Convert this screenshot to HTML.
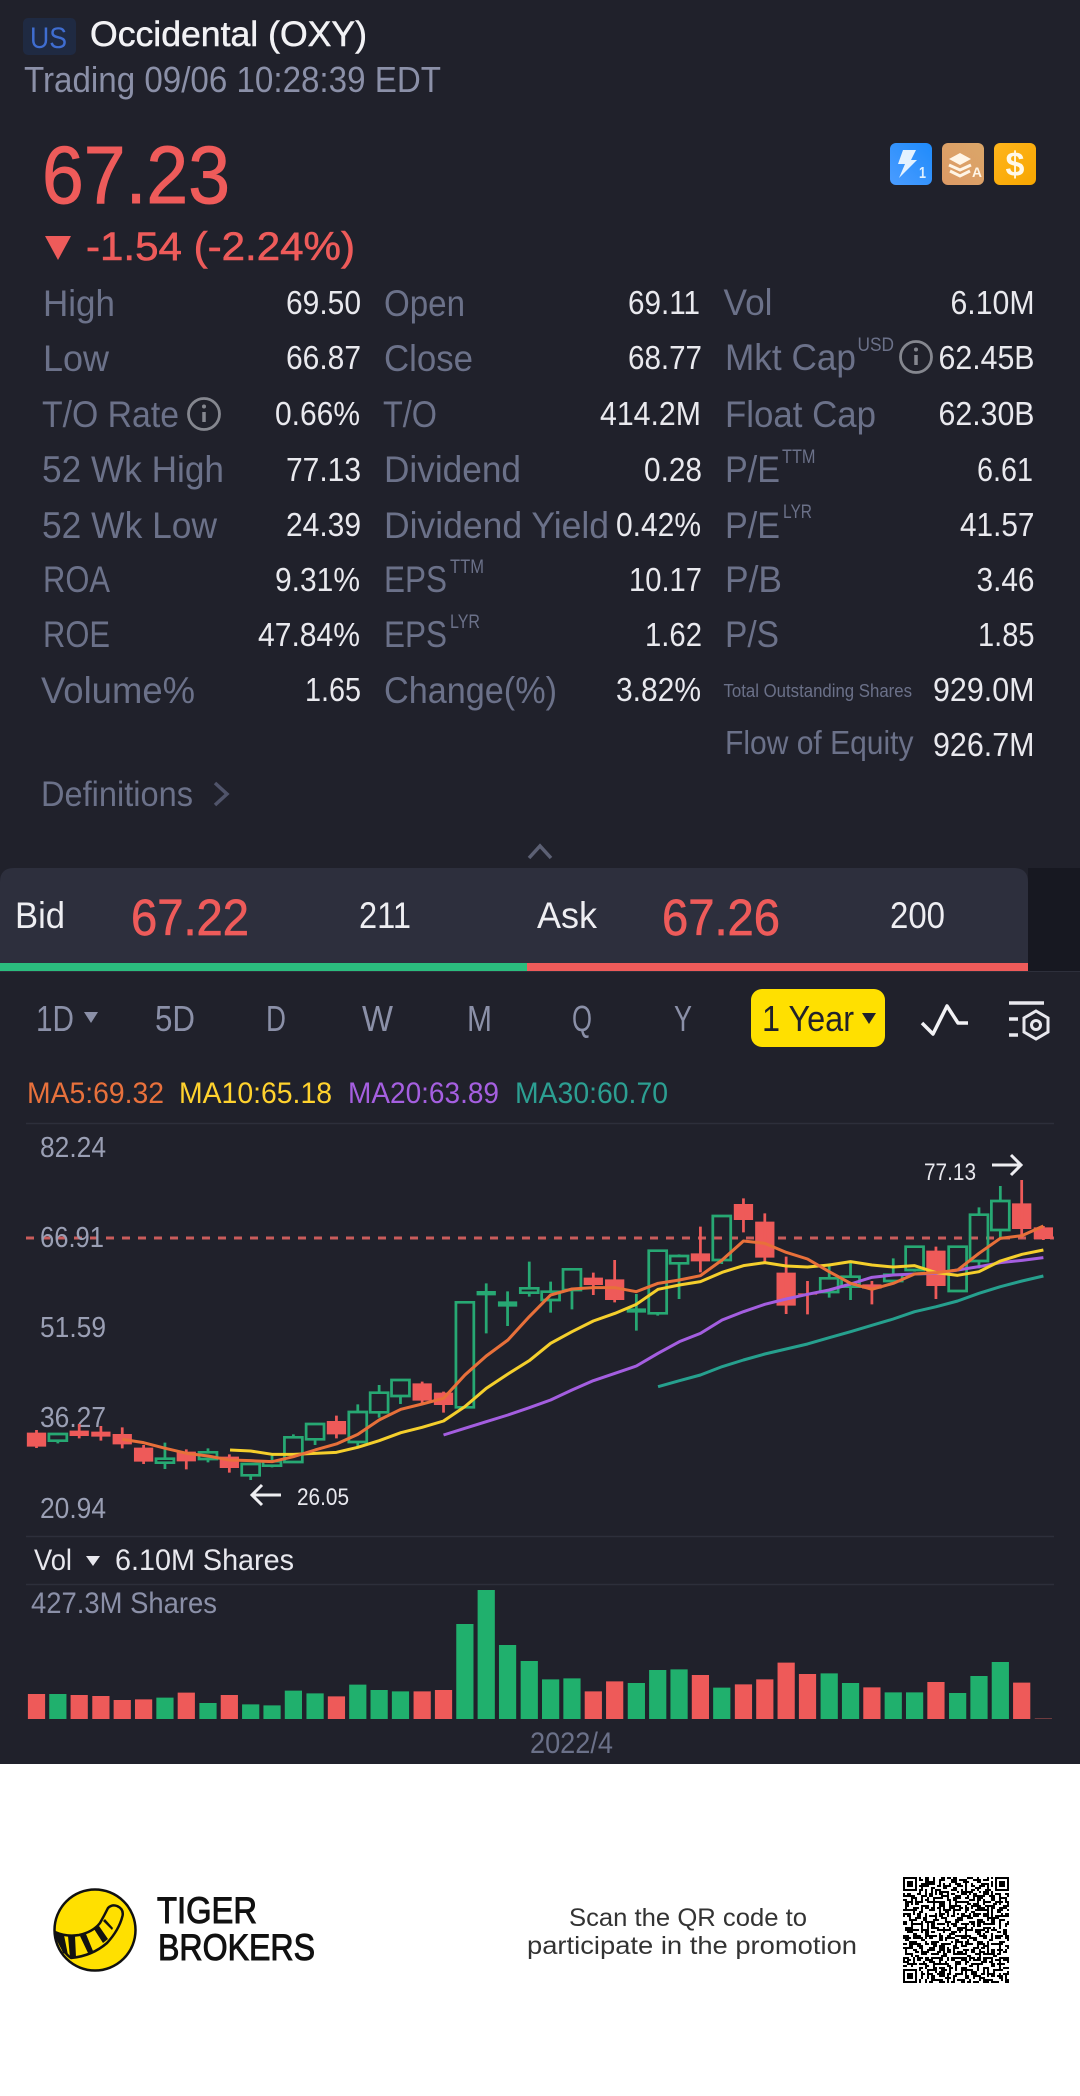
<!DOCTYPE html>
<html lang="en"><head><meta charset="utf-8"><title>Occidental (OXY)</title>
<style>
html,body{margin:0;padding:0;background:#fff}
svg{display:block}
text{font-family:"Liberation Sans",sans-serif}
.l{font-size:37px;fill:#6b7189}
.v{font-size:33px;fill:#e9e9ee}
.s{font-size:19px;fill:#6b7189}
.t{font-size:36px;fill:#8b90a8}
.a{font-size:29px;fill:#9a9fb4}
.w{font-size:37px;fill:#eeeef2}
.r{fill:#ee5b5a;stroke:#ee5b5a}
</style></head><body>
<svg xmlns="http://www.w3.org/2000/svg" width="1080" height="2096" viewBox="0 0 1080 2096">
<defs>
<linearGradient id="gb" x1="0" y1="1" x2="1" y2="0"><stop offset="0" stop-color="#4a9cff"/><stop offset="1" stop-color="#1f8bfb"/></linearGradient>
<linearGradient id="gm" x1="0" y1="1" x2="1" y2="0"><stop offset="0" stop-color="#dc9a66"/><stop offset="1" stop-color="#dba668"/></linearGradient>
<linearGradient id="go" x1="0" y1="0" x2="1" y2="1"><stop offset="0" stop-color="#ffb51c"/><stop offset="1" stop-color="#f7a600"/></linearGradient>
<pattern id="q1" patternUnits="userSpaceOnUse" width="11" height="11"><path d="M0 0h2v1H0zM4 0h1v3H4zM7 1h3v1H7zM1 3h1v2H1zM6 4h2v1H6zM9 3h1v3H9zM3 5h2v1H3zM0 7h1v2H0zM5 7h1v1H5zM7 7h2v2H7zM2 8h2v1H2zM4 10h3v1H4zM10 9h1v1h-1z"/></pattern>
<pattern id="q2" patternUnits="userSpaceOnUse" width="13" height="13"><path d="M2 1h1v1H2zM6 0h2v1H6zM11 1h2v2h-2zM0 3h3v1H0zM5 2h1v3H5zM8 4h2v1H8zM3 6h1v3H3zM11 6h1v1h-1zM6 7h3v1H6zM0 9h2v1H0zM9 9h1v3H9zM5 10h2v1H5zM1 12h4v1H1zM12 10h1v2h-1z"/></pattern>
<pattern id="q3" patternUnits="userSpaceOnUse" width="17" height="17"><path d="M1 1h3v1H1zM8 0h1v2H8zM13 2h3v1h-3zM4 4h1v2H4zM10 3h2v2h-2zM0 6h2v1H0zM7 6h3v1H7zM14 6h1v3h-1zM2 9h4v1H2zM10 9h2v1h-2zM6 11h1v3H6zM12 12h4v1h-4zM1 13h2v2H1zM9 14h2v1H9zM14 15h2v2h-2zM4 16h3v1H4z"/></pattern>
<clipPath id="cc"><rect x="0" y="1100" width="1053" height="440"/></clipPath>
</defs>

<rect width="1080" height="1764" fill="#20212b"/>
<rect y="1764" width="1080" height="332" fill="#fff"/>

<!-- header -->
<rect x="23" y="18" width="53" height="37" rx="5" fill="#1f2a42"/>
<text x="30" y="48" textLength="37" lengthAdjust="spacingAndGlyphs" style="font-size:30px;fill:#3f6dd0">US</text>
<text x="90" y="46" textLength="277" lengthAdjust="spacingAndGlyphs" stroke="#f2f2f5" stroke-width=".5" style="font-size:35px;fill:#f2f2f5">Occidental (OXY)</text>
<text x="24" y="92" textLength="417" lengthAdjust="spacingAndGlyphs" style="font-size:36px;fill:#8b90a8">Trading 09/06 10:28:39 EDT</text>

<text class="r" x="42" y="203" textLength="188" lengthAdjust="spacingAndGlyphs" stroke-width=".9" style="font-size:82px">67.23</text>
<path d="M45 236h26l-13 24z" fill="#ee5b5a"/>
<text class="r" x="86" y="260" textLength="269" lengthAdjust="spacingAndGlyphs" stroke-width=".6" style="font-size:40px">-1.54 (-2.24%)</text>

<!-- badges -->
<rect x="890" y="143" width="42" height="42" rx="6" fill="url(#gb)"/>
<path d="M903 150H916L911 160H917L899 178L905 164H898Z" fill="#e4f2ff"/>
<text x="919" y="178" textLength="7" lengthAdjust="spacingAndGlyphs" style="font-size:16px;font-weight:700;fill:#dff0ff">1</text>
<rect x="942" y="143" width="42" height="42" rx="6" fill="url(#gm)"/>
<path d="M960 153l11 6-11 6-11-6z" fill="#fff5e6"/>
<path d="M949 165l11 5 11-5M950 171l10 5 10-5" fill="none" stroke="#fff5e6" stroke-width="3"/>
<text x="972" y="177" textLength="10" lengthAdjust="spacingAndGlyphs" style="font-size:14px;font-weight:700;fill:#fff5e6">A</text>
<rect x="994" y="143" width="42" height="42" rx="6" fill="url(#go)"/>
<text x="1015" y="176" text-anchor="middle" style="font-size:34px;font-weight:700;fill:#fff8e8">$</text>

<!-- column 1 -->
<text class="l" x="43" y="316" textLength="72" lengthAdjust="spacingAndGlyphs">High</text>
<text class="l" x="43" y="371" textLength="66" lengthAdjust="spacingAndGlyphs">Low</text>
<text class="l" x="42" y="427" textLength="137" lengthAdjust="spacingAndGlyphs">T/O Rate</text>
<text class="l" x="42" y="482" textLength="182" lengthAdjust="spacingAndGlyphs">52 Wk High</text>
<text class="l" x="42" y="538" textLength="175" lengthAdjust="spacingAndGlyphs">52 Wk Low</text>
<text class="l" x="43" y="592" textLength="67" lengthAdjust="spacingAndGlyphs">ROA</text>
<text class="l" x="43" y="647" textLength="67" lengthAdjust="spacingAndGlyphs">ROE</text>
<text class="l" x="41" y="703" textLength="154" lengthAdjust="spacingAndGlyphs">Volume%</text>
<text class="l" x="41" y="806" textLength="152" lengthAdjust="spacingAndGlyphs" style="font-size:35px">Definitions</text>
<path d="M215 783l12 11-12 11" fill="none" stroke="#50546a" stroke-width="3.500"/>

<text class="v" x="286" y="314" textLength="75" lengthAdjust="spacingAndGlyphs">69.50</text>
<text class="v" x="286" y="369" textLength="75" lengthAdjust="spacingAndGlyphs">66.87</text>
<text class="v" x="275" y="425" textLength="85" lengthAdjust="spacingAndGlyphs">0.66%</text>
<text class="v" x="286" y="481" textLength="75" lengthAdjust="spacingAndGlyphs">77.13</text>
<text class="v" x="286" y="536" textLength="75" lengthAdjust="spacingAndGlyphs">24.39</text>
<text class="v" x="275" y="591" textLength="85" lengthAdjust="spacingAndGlyphs">9.31%</text>
<text class="v" x="258" y="646" textLength="102" lengthAdjust="spacingAndGlyphs">47.84%</text>
<text class="v" x="305" y="701" textLength="56" lengthAdjust="spacingAndGlyphs">1.65</text>

<circle cx="204" cy="414" r="15.500" fill="none" stroke="#85878f" stroke-width="2.800"/>
<path d="M204 412v10" stroke="#85878f" stroke-width="3.500"/><circle cx="204" cy="406.500" r="2" fill="#85878f"/>

<!-- column 2 -->
<text class="l" x="384" y="316" textLength="81" lengthAdjust="spacingAndGlyphs">Open</text>
<text class="l" x="384" y="371" textLength="89" lengthAdjust="spacingAndGlyphs">Close</text>
<text class="l" x="383" y="427" textLength="54" lengthAdjust="spacingAndGlyphs">T/O</text>
<text class="l" x="384" y="482" textLength="137" lengthAdjust="spacingAndGlyphs">Dividend</text>
<text class="l" x="384" y="538" textLength="225" lengthAdjust="spacingAndGlyphs">Dividend Yield</text>
<text class="l" x="384" y="592" textLength="63" lengthAdjust="spacingAndGlyphs">EPS</text>
<text class="s" x="450" y="573" textLength="34" lengthAdjust="spacingAndGlyphs">TTM</text>
<text class="l" x="384" y="647" textLength="63" lengthAdjust="spacingAndGlyphs">EPS</text>
<text class="s" x="450" y="628" textLength="30" lengthAdjust="spacingAndGlyphs">LYR</text>
<text class="l" x="384" y="703" textLength="173" lengthAdjust="spacingAndGlyphs">Change(%)</text>

<text class="v" x="628" y="314" textLength="72" lengthAdjust="spacingAndGlyphs">69.11</text>
<text class="v" x="628" y="369" textLength="74" lengthAdjust="spacingAndGlyphs">68.77</text>
<text class="v" x="600" y="425" textLength="101" lengthAdjust="spacingAndGlyphs">414.2M</text>
<text class="v" x="644" y="481" textLength="58" lengthAdjust="spacingAndGlyphs">0.28</text>
<text class="v" x="616" y="536" textLength="85" lengthAdjust="spacingAndGlyphs">0.42%</text>
<text class="v" x="629" y="591" textLength="73" lengthAdjust="spacingAndGlyphs">10.17</text>
<text class="v" x="645" y="646" textLength="57" lengthAdjust="spacingAndGlyphs">1.62</text>
<text class="v" x="616" y="701" textLength="85" lengthAdjust="spacingAndGlyphs">3.82%</text>

<!-- column 3 -->
<text class="l" x="723.500" y="315" textLength="49" lengthAdjust="spacingAndGlyphs">Vol</text>
<text class="l" x="725" y="370" textLength="131" lengthAdjust="spacingAndGlyphs">Mkt Cap</text>
<text class="s" x="857.500" y="351" textLength="36.500" lengthAdjust="spacingAndGlyphs">USD</text>
<text class="l" x="725" y="427" textLength="151" lengthAdjust="spacingAndGlyphs">Float Cap</text>
<text class="l" x="725" y="482" textLength="55" lengthAdjust="spacingAndGlyphs">P/E</text>
<text class="s" x="782" y="463" textLength="33.500" lengthAdjust="spacingAndGlyphs">TTM</text>
<text class="l" x="725" y="538" textLength="55" lengthAdjust="spacingAndGlyphs">P/E</text>
<text class="s" x="783" y="518" textLength="29" lengthAdjust="spacingAndGlyphs">LYR</text>
<text class="l" x="725" y="592" textLength="57" lengthAdjust="spacingAndGlyphs">P/B</text>
<text class="l" x="725" y="647" textLength="54" lengthAdjust="spacingAndGlyphs">P/S</text>
<text x="723.500" y="697" textLength="188.500" lengthAdjust="spacingAndGlyphs" style="font-size:18px;fill:#6b7189">Total Outstanding Shares</text>
<text class="l" x="725" y="754" textLength="188.500" lengthAdjust="spacingAndGlyphs" style="font-size:33px">Flow of Equity</text>

<circle cx="916" cy="357" r="15.500" fill="none" stroke="#85878f" stroke-width="2.800"/>
<path d="M916 355v10" stroke="#85878f" stroke-width="3.500"/><circle cx="916" cy="349.500" r="2" fill="#85878f"/>

<text class="v" x="950.500" y="314" textLength="84" lengthAdjust="spacingAndGlyphs">6.10M</text>
<text class="v" x="938.500" y="369" textLength="96" lengthAdjust="spacingAndGlyphs">62.45B</text>
<text class="v" x="938.500" y="425" textLength="96" lengthAdjust="spacingAndGlyphs">62.30B</text>
<text class="v" x="977" y="481" textLength="56" lengthAdjust="spacingAndGlyphs">6.61</text>
<text class="v" x="960" y="536" textLength="74.500" lengthAdjust="spacingAndGlyphs">41.57</text>
<text class="v" x="976.500" y="591" textLength="58" lengthAdjust="spacingAndGlyphs">3.46</text>
<text class="v" x="978" y="646" textLength="56.500" lengthAdjust="spacingAndGlyphs">1.85</text>
<text class="v" x="933" y="701" textLength="101.500" lengthAdjust="spacingAndGlyphs">929.0M</text>
<text class="v" x="933" y="756" textLength="101.500" lengthAdjust="spacingAndGlyphs">926.7M</text>

<!-- chevron -->
<path d="M529 858l11-12 11 12" fill="none" stroke="#5c6074" stroke-width="3.500"/>

<!-- bid/ask -->
<rect x="1028" y="868" width="52" height="103" fill="#171821"/>
<path d="M0 882q0-14 14-14H1014q14 0 14 14V971H0z" fill="#2d2f3d"/>
<rect x="0" y="963" width="527" height="8" fill="#2bbd7e"/>
<rect x="527" y="963" width="501" height="8" fill="#ee5b5a"/>
<rect x="0" y="971" width="1080" height="1" fill="#2d2f3b"/>
<text class="w" x="15" y="928" textLength="50" lengthAdjust="spacingAndGlyphs">Bid</text>
<text class="r" x="131" y="935" textLength="118" lengthAdjust="spacingAndGlyphs" stroke-width=".7" style="font-size:51px">67.22</text>
<text class="w" x="359" y="928" textLength="52" lengthAdjust="spacingAndGlyphs">211</text>
<text class="w" x="537" y="928" textLength="60" lengthAdjust="spacingAndGlyphs">Ask</text>
<text class="r" x="662" y="935" textLength="118" lengthAdjust="spacingAndGlyphs" stroke-width=".7" style="font-size:51px">67.26</text>
<text class="w" x="890" y="928" textLength="55" lengthAdjust="spacingAndGlyphs">200</text>

<!-- tabs -->
<text class="t" x="36" y="1031" textLength="38" lengthAdjust="spacingAndGlyphs">1D</text>
<path d="M84 1012h14l-7 11z" fill="#8b90a8"/>
<text class="t" x="155" y="1031" textLength="40" lengthAdjust="spacingAndGlyphs">5D</text>
<text class="t" x="266" y="1031" textLength="20" lengthAdjust="spacingAndGlyphs">D</text>
<text class="t" x="362" y="1031" textLength="31" lengthAdjust="spacingAndGlyphs">W</text>
<text class="t" x="467" y="1031" textLength="25" lengthAdjust="spacingAndGlyphs">M</text>
<text class="t" x="572" y="1031" textLength="20" lengthAdjust="spacingAndGlyphs">Q</text>
<text class="t" x="674" y="1031" textLength="18" lengthAdjust="spacingAndGlyphs">Y</text>
<rect x="751" y="989" width="134" height="58" rx="11" fill="#ffe000"/>
<text x="762" y="1031" textLength="92" lengthAdjust="spacingAndGlyphs" style="font-size:36px;fill:#20212b">1 Year</text>
<path d="M862 1013h14l-7 11z" fill="#20212b"/>
<path d="M922 1023l11 11 14-28 11 17h10" fill="none" stroke="#f2f2f5" stroke-width="3.500" stroke-linejoin="round"/>
<path d="M1009 1003h35M1009 1019h9M1009 1035h9" stroke="#e8e8ee" stroke-width="3.500"/>
<path d="M1036 1011l12 7v14l-12 7-12-7v-14z" fill="none" stroke="#e8e8ee" stroke-width="3"/>
<circle cx="1036" cy="1025" r="4.500" fill="none" stroke="#e8e8ee" stroke-width="3"/>

<!-- MA legend -->
<text x="27" y="1103" textLength="137" lengthAdjust="spacingAndGlyphs" style="font-size:30px;fill:#e8713c">MA5:69.32</text>
<text x="179" y="1103" textLength="153" lengthAdjust="spacingAndGlyphs" style="font-size:30px;fill:#ffd22e">MA10:65.18</text>
<text x="348" y="1103" textLength="151" lengthAdjust="spacingAndGlyphs" style="font-size:30px;fill:#a55fe0">MA20:63.89</text>
<text x="515" y="1103" textLength="153" lengthAdjust="spacingAndGlyphs" style="font-size:30px;fill:#2c9f92">MA30:60.70</text>

<path d="M26 1123.500H1054M26 1536.500H1054M26 1584.500H1054" stroke="#2d2f3b" stroke-width="1.500"/>

<path d="M26 1238H1054" stroke="#c95c5b" stroke-width="3" stroke-dasharray="8 8"/>
<text class="a" x="40" y="1157" textLength="66" lengthAdjust="spacingAndGlyphs">82.24</text>
<text class="a" x="40" y="1247" textLength="64" lengthAdjust="spacingAndGlyphs">66.91</text>
<text class="a" x="40" y="1337" textLength="66" lengthAdjust="spacingAndGlyphs">51.59</text>
<text class="a" x="40" y="1427" textLength="66" lengthAdjust="spacingAndGlyphs">36.27</text>
<text class="a" x="40" y="1518" textLength="66" lengthAdjust="spacingAndGlyphs">20.94</text>

<!-- candles -->
<g clip-path="url(#cc)"><g transform="translate(0,1120) scale(.34435,.33333)">
<path fill="#ee5a59" d="M78 938h56v42h-56zM202 932h56v16h-56zM265 935h56v15h-56zM327 942h56v31h-56zM389 983h56v42h-56zM513 995h56v29h-56zM638 1010h56v34h-56zM949 903h56v40h-56zM1198 790h56v52h-56zM1260 818h56v37h-56zM1695 473h56v22h-56zM1757 478h56v62h-56zM2006 400h56v24h-56zM2131 252h56v48h-56zM2193 305h56v108h-56zM2255 458h56v99h-56zM2317 520h56v4h-56zM2504 493h56v13h-56zM2690 392h56v106h-56zM2939 250h56v77h-56zM3002 322h56v35h-56z"/>
<path fill="none" stroke="#ee5a59" stroke-width="8" d="M106 930V984M230 912V955M293 918V962M355 922V985M417 975V1032M541 988V1048M666 1003V1058M977 887V955M1226 785V855M1288 815V878M1723 458V525M1785 420V547M2034 320V457M2159 235V337M2221 280V425M2283 410V582M2345 483V583M2532 483V553M2718 380V537M2967 180V355M3030 318V360"/>
<path fill="#27a873" d="M1384 513h56v13h-56zM1446 544h56v16h-56zM1820 565h56v13h-56z"/>
<path fill="none" stroke="#27a873" stroke-width="8" d="M1412 490V640M1474 514V618M1848 522V632
M142 942h52v20h-52zM168 962V970
M453 1016h52v12h-52zM479 968V1016M479 1028V1047
M578 997h52v20h-52zM604 985V997M604 1017V1027
M702 1032h52v34h-52zM728 1066V1080
M764 1024h52v13h-52zM790 1002V1024M790 1037V1042
M826 952h52v74h-52zM852 943V952
M889 912h52v46h-52zM915 958V975
M1013 876h52v90h-52zM1039 853V876M1039 966V978
M1075 818h52v59h-52zM1101 795V818M1101 877V893
M1137 780h52v48h-52zM1163 828V852
M1324 547h52v315h-52z
M1511 505h52v13h-52zM1537 425V505M1537 518V530
M1573 515h52v25h-52zM1599 485V515M1599 540V578
M1635 448h52v62h-52zM1661 510V568
M1884 392h52v188h-52zM1910 580V587
M1946 408h52v22h-52zM1972 430V537M1972 403V408
M2070 288h52v132h-52zM2096 420V432
M2382 475h52v41h-52zM2408 430V475M2408 516V533
M2444 470h52v30h-52zM2470 425V470M2470 500V540
M2568 464h52v19h-52zM2594 415V464M2594 483V487
M2630 380h52v70h-52zM2656 450V455
M2755 380h52v133h-52z
M2817 284h52v139h-52zM2843 262V284M2843 423V445
M2879 243h52v87h-52zM2905 198V243M2905 330V355"/>
<!-- MA lines -->
<g fill="none" stroke-width="9" stroke-linejoin="round">
<path stroke="#26a08e" d="M1911 800L1973 782 2034 765 2097 740 2159 720 2221 702 2283 687 2345 672 2408 653 2470 635 2532 616 2594 597 2656 575 2719 560 2781 543 2843 520 2905 500 2968 483 3030 468"/>
<path stroke="#a45ee0" d="M1288 945L1350 925 1412 905 1475 885 1537 863 1599 840 1661 810 1723 782 1786 760 1848 738 1911 700 1973 665 2034 640 2097 600 2159 575 2221 553 2283 537 2345 523 2408 510 2470 492 2532 472 2594 465 2656 462 2719 460 2781 450 2843 440 2905 428 2968 421 3030 413"/>
<path stroke="#f5cf2c" d="M668 990L728 993 790 1003 852 1003 915 1000 977 997 1039 982 1101 962 1164 938 1226 922 1288 903 1350 860 1412 805 1475 762 1537 722 1599 670 1661 635 1723 603 1786 580 1848 553 1911 508 1973 495 2034 485 2097 457 2159 437 2221 428 2283 438 2345 441 2408 435 2470 425 2532 435 2594 441 2656 437 2719 458 2781 466 2843 455 2905 423 2968 403 3030 390"/>
<path stroke="#e8703a" d="M355 958L417 968 480 985 542 1000 604 1008 666 1020 728 1022 790 1025 852 1010 915 990 977 972 1039 943 1101 900 1164 868 1226 852 1288 835 1350 765 1412 708 1475 660 1537 590 1599 525 1661 507 1723 503 1786 503 1848 515 1911 490 1973 480 2034 467 2097 420 2159 363 2221 370 2283 397 2345 417 2408 455 2470 490 2532 508 2594 490 2656 462 2719 458 2781 450 2843 400 2905 355 2968 347 3030 318"/>
</g>
</g></g>

<!-- hi/lo markers -->
<text x="924" y="1180" textLength="52" lengthAdjust="spacingAndGlyphs" style="font-size:24px;fill:#e8e8ee">77.13</text>
<path d="M992 1165H1021M1011 1155l10 10-10 10" fill="none" stroke="#eeeef2" stroke-width="3"/>
<text x="297" y="1505" textLength="52" lengthAdjust="spacingAndGlyphs" style="font-size:24px;fill:#e8e8ee">26.05</text>
<path d="M281 1495H252M262 1485l-10 10 10 10" fill="none" stroke="#eeeef2" stroke-width="3"/>

<!-- volume -->
<text x="34" y="1570" textLength="38" lengthAdjust="spacingAndGlyphs" style="font-size:30px;fill:#e8e8ee">Vol</text>
<path d="M86 1556h14l-7 10z" fill="#e8e8ee"/>
<text x="115" y="1570" textLength="179" lengthAdjust="spacingAndGlyphs" style="font-size:30px;fill:#e8e8ee">6.10M Shares</text>
<text x="31" y="1613" textLength="186" lengthAdjust="spacingAndGlyphs" style="font-size:30px;fill:#8b90a8">427.3M Shares</text>
<g transform="translate(0,1530) scale(.34435,.33333)">
<path fill="#ee5a59" d="M81 492h50V567h-50zM205 495h50V567h-50zM268 498h50V567h-50zM330 510h50V567h-50zM392 508h50V567h-50zM516 488h50V567h-50zM641 495h50V567h-50zM952 499h50V567h-50zM1201 484h50V567h-50zM1263 480h50V567h-50zM1698 484h50V567h-50zM1760 454h50V567h-50zM2009 435h50V567h-50zM2134 463h50V567h-50zM2196 448h50V567h-50zM2258 398h50V567h-50zM2320 432h50V567h-50zM2507 472h50V567h-50zM2693 456h50V567h-50zM2942 458h50V567h-50z"/>
<path fill="#20b06d" d="M143 492h50V567h-50zM454 503h50V567h-50zM579 519h50V567h-50zM703 523h50V567h-50zM765 526h50V567h-50zM827 482h50V567h-50zM890 490h50V567h-50zM1014 464h50V567h-50zM1076 480h50V567h-50zM1138 484h50V567h-50zM1325 282h50V567h-50zM1387 180h50V567h-50zM1449 345h50V567h-50zM1512 393h50V567h-50zM1574 448h50V567h-50zM1636 445h50V567h-50zM1823 459h50V567h-50zM1885 420h50V567h-50zM1947 418h50V567h-50zM2071 473h50V567h-50zM2383 430h50V567h-50zM2445 459h50V567h-50zM2569 487h50V567h-50zM2631 487h50V567h-50zM2756 489h50V567h-50zM2818 438h50V567h-50zM2880 396h50V567h-50z"/>
<path fill="#6e3b3f" d="M3005 564h50v3h-50z"/>
</g>
<text x="530" y="1753" textLength="83" lengthAdjust="spacingAndGlyphs" style="font-size:30px;fill:#6b7189">2022/4</text>

<!-- logo -->
<circle cx="95" cy="1930" r="40.500" fill="#ffe000" stroke="#111" stroke-width="2.500"/>
<path d="M55 1932Q66 1937 79 1935Q93 1932 100 1923Q104 1916 108 1908Q112 1904 117 1906Q124 1909 122.500 1916Q119 1930 107 1943Q92 1956 71 1958Q62 1952 55 1932Z" fill="#ffe000" stroke="#111" stroke-width="2.500" stroke-linejoin="round"/>
<path d="M55 1933l9 2 4 20-5-2zM68 1936l7 0 1 21-6 1zM80 1936l6-2 7 17-5 2zM94 1929l5-3 9 13-5 4zM103 1921l2-2 8 9-1 2z" fill="#111"/>
<text x="157" y="1923" textLength="100" lengthAdjust="spacingAndGlyphs" stroke="#111" stroke-width="1" style="font-size:37px;fill:#111">TIGER</text>
<text x="158" y="1960" textLength="157" lengthAdjust="spacingAndGlyphs" stroke="#111" stroke-width="1" style="font-size:37px;fill:#111">BROKERS</text>

<text x="569" y="1926" textLength="238" lengthAdjust="spacingAndGlyphs" style="font-size:25px;fill:#333">Scan the QR code to</text>
<text x="527" y="1954" textLength="330" lengthAdjust="spacingAndGlyphs" style="font-size:25px;fill:#333">participate in the promotion</text>

<!-- QR -->
<g transform="translate(903,1877) scale(2)">
<rect width="53" height="53" fill="#fff"/>
<rect width="53" height="53" fill="url(#q1)"/>
<rect width="53" height="53" fill="url(#q2)"/>
<rect width="53" height="53" fill="url(#q3)"/>
<path fill="#fff" d="M0 0h8v8H0zM45 0h8v8h-8zM0 45h8v8H0z"/>
<path fill-rule="evenodd" d="M0 0h7v7H0zM1 1v5h5V1zM2 2h3v3H2zM46 0h7v7h-7zM47 1v5h5V1zM48 2h3v3h-3zM0 46h7v7H0zM1 47v5h5v-5zM2 48h3v3H2z"/>
</g>
</svg>
</body></html>
